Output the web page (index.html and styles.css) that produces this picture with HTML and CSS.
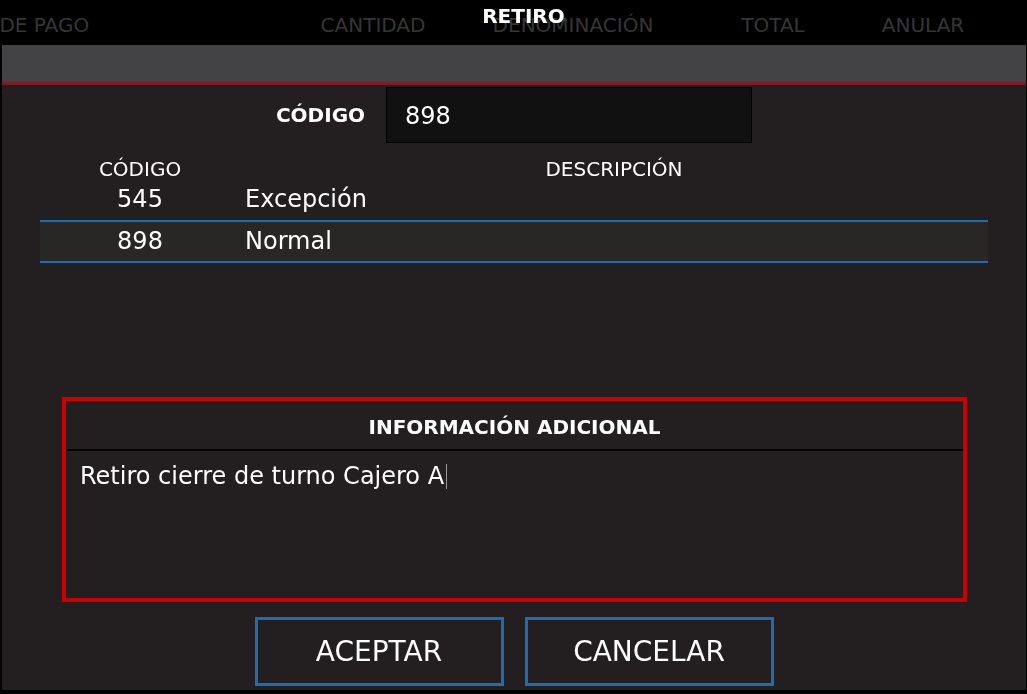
FILE: index.html
```html
<!DOCTYPE html>
<html>
<head>
    <meta charset="utf-8">
    <title>Retiro</title>
    <link rel="stylesheet" href="styles.css">
</head>
<body>
    <div class="grid-head">
        <span class="col col-pago">FORMA DE PAGO</span>
        <span class="col col-cant">CANTIDAD</span>
        <span class="col col-denom">DENOMINACIÓN</span>
        <span class="col col-total">TOTAL</span>
        <span class="col col-anular">ANULAR</span>
    </div>

    <div class="overlay">
        <div class="dialog-title">RETIRO</div>
        <div class="dialog">
            <div class="dialog-bar"></div>
            <div class="dialog-body">
                <div class="code-row">
                    <label class="code-label">CÓDIGO</label>
                    <div class="code-input">898</div>
                </div>

                <table class="codes">
                    <thead>
                        <tr>
                            <th class="c-code">CÓDIGO</th>
                            <th>DESCRIPCIÓN</th>
                        </tr>
                    </thead>
                    <tbody>
                        <tr>
                            <td class="c-code">545</td>
                            <td>Excepción</td>
                        </tr>
                        <tr class="selected">
                            <td class="c-code">898</td>
                            <td>Normal</td>
                        </tr>
                    </tbody>
                </table>

                <div class="info">
                    <div class="info-head">INFORMACIÓN ADICIONAL</div>
                    <div class="info-text">Retiro cierre de turno Cajero A<span class="caret"></span></div>
                </div>

                <div class="actions">
                    <button class="btn">ACEPTAR</button>
                    <button class="btn">CANCELAR</button>
                </div>
            </div>
        </div>
    </div>
</body>
</html>
```

FILE: styles.css
```css
body {
    margin: 0;
    background: #000;
    color: #fff;
    font-family: "DejaVu Sans", sans-serif;
    height: 694px;
    overflow: hidden;
}
.grid-head {
    display: flex;
    height: 45px;
    align-items: center;
    padding-top: 5px;
    box-sizing: border-box;
    color: #363636;
    font-size: 20px;
    white-space: nowrap;
}
.col {
    text-align: center;
}
.col-pago {
    width: 273px;
    text-align: left;
    text-indent: -79px;
}
.col-cant,
.col-denom,
.col-total {
    width: 200px;
}
.col-anular {
    width: 100px;
}
.overlay {
    position: fixed;
    top: 0;
    left: 0;
    right: 0;
    bottom: 0;
    display: flex;
    flex-direction: column;
}
.dialog-title {
    height: 45px;
    box-sizing: border-box;
    padding: 4px 0 0 20px;
    text-align: center;
    font-weight: bold;
    font-size: 20px;
    line-height: 24px;
}
.dialog {
    margin: 0 1px 4px 2px;
    flex: 1;
    display: flex;
    flex-direction: column;
    background: #231f20;
}
.dialog-bar {
    height: 37px;
    background: #434345;
    border-bottom: 3px solid #801b25;
}
.dialog-body {
    padding: 2px 38px 0;
}
.code-row {
    display: flex;
    justify-content: center;
    align-items: center;
    gap: 21px;
}
.code-label {
    font-weight: bold;
    font-size: 20px;
}
.code-input {
    width: 346px;
    height: 54px;
    background: #111;
    border: 1px solid #000;
    font-size: 24px;
    line-height: 56px;
    padding-left: 18px;
}
.codes {
    width: 100%;
    border-collapse: collapse;
    margin-top: 14px;
}
.codes th {
    font-weight: normal;
    font-size: 20px;
    height: 24px;
    padding: 0;
    text-align: center;
}
.codes td {
    font-size: 24px;
    height: 36px;
    padding: 0 0 3px 5px;
    text-align: left;
}
.codes .c-code {
    width: 200px;
    padding-left: 0;
    text-align: center;
}
.codes tr.selected td {
    background: #282726;
    border-top: 2px solid #1d6db3;
    border-bottom: 2px solid #1d6db3;
    height: 38px;
    padding-bottom: 1px;
}
.info {
    margin: 134px 21px 0 22px;
    border: 4px solid #cc0000;
    height: 197px;
    display: flex;
    flex-direction: column;
}
.info-head {
    height: 50px;
    box-sizing: border-box;
    padding-top: 3px;
    border-bottom: 2px solid #000;
    display: flex;
    align-items: center;
    justify-content: center;
    font-weight: bold;
    font-size: 20px;
}
.info-text {
    flex: 1;
    padding: 10px 14px 0;
    font-size: 24px;
    line-height: 30px;
}
.caret {
    display: inline-block;
    width: 1px;
    height: 25px;
    background: #999;
    vertical-align: -5px;
    margin-left: 2px;
}
.actions {
    display: flex;
    justify-content: center;
    gap: 21px;
    margin-top: 15px;
}
.btn {
    width: 249px;
    height: 69px;
    background: transparent;
    border: 3px solid #1e6db2;
    color: #fff;
    font-family: "DejaVu Sans", sans-serif;
    font-size: 28px;
    cursor: pointer;
}
```
